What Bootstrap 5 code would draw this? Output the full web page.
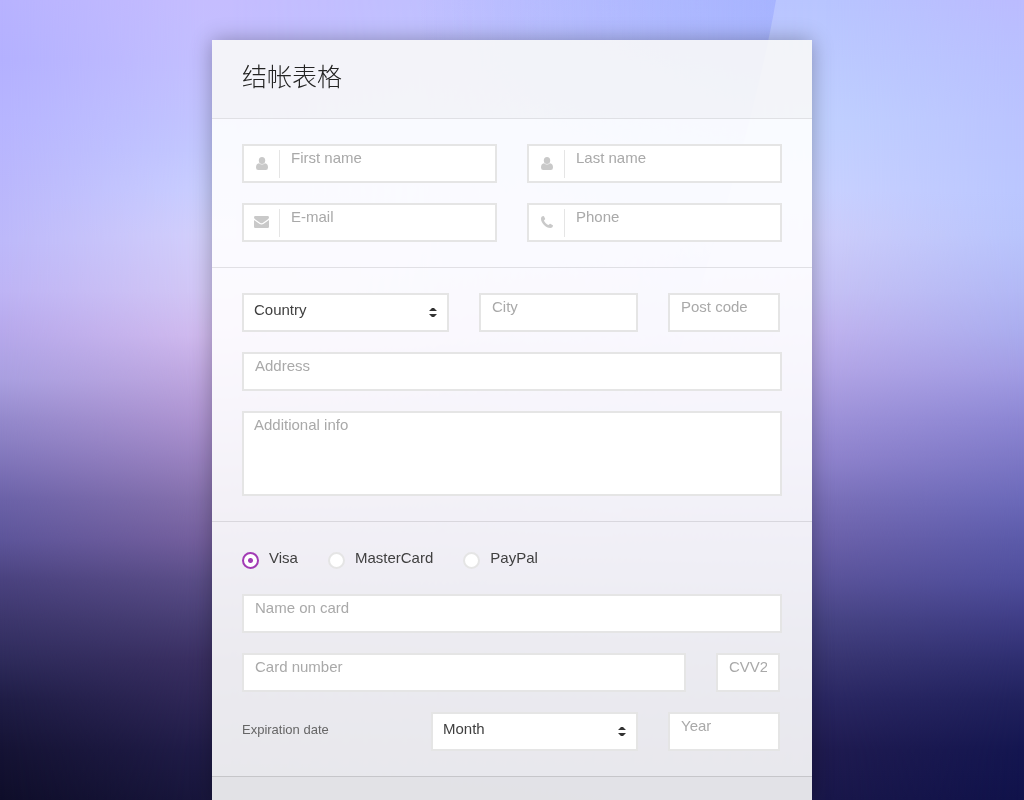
<!DOCTYPE html>
<html lang="zh-CN">
<head>
<meta charset="utf-8">
<meta name="viewport" content="width=device-width, initial-scale=1">
<title>结帐表格</title>
<link href="https://cdn.jsdelivr.net/npm/bootstrap@5.3.0/dist/css/bootstrap.min.css" rel="stylesheet">
<style>
  :root { --field: #e5e5e5; --accent: #a23bb5; }
  body {
    font-family: "Liberation Sans", "Noto Sans CJK SC", sans-serif;
    font-size: 15px; line-height: 23px; color: #404040;
    background: none; padding-top: 40px;
  }
  .backdrop { position: fixed; inset: 0; z-index: -1; }
  .sheet { width: 100%; max-width: 600px; box-shadow: 0 0 20px rgba(0, 0, 0, .3); }
  .sheet-head { padding: 20px 30px 28px; background: rgba(248, 248, 248, .9); }
  .sheet-head h1 { font: 300 25px/30px "Noto Sans CJK SC", sans-serif; color: #232323; margin: 0; }
  .sheet section { padding: 25px 30px; border-top: 1px solid rgba(0, 0, 0, .1); background: rgba(255, 255, 255, .9); }
  .sheet-foot { border-top: 1px solid rgba(0, 0, 0, .12); background: rgba(248, 248, 248, .9); }
  .stack { gap: 20px; }
  .cols { column-gap: 30px; row-gap: 20px; }
  .pair { grid-template-columns: 1fr 1fr; }
  .place { grid-template-columns: 207fr 159fr 112fr; padding-right: 2px; }
  .number { grid-template-columns: 444fr 64fr; padding-right: 2px; }
  .expiry { grid-template-columns: 159fr 207fr 112fr; padding-right: 2px; }
  .sheet .form-control, .sheet .form-select {
    min-width: 0; height: 39px; border: 2px solid var(--field); border-radius: 0;
    padding: 0 11px 13px; font-size: 15px; line-height: 22px; color: #404040; background-color: #fff;
  }
  .sheet .form-control:focus, .sheet .form-select:focus { border-color: var(--accent); box-shadow: none; }
  .sheet .form-control::placeholder { color: #a9a9a9; }
  .sheet textarea.form-control { height: 85px; resize: none; padding: 0 10px; line-height: 24px; }
  .sheet .form-select {
    padding: 0 30px 5px 10px; line-height: 30px;
    background-image: url("data:image/svg+xml,%3Csvg xmlns='http://www.w3.org/2000/svg' viewBox='0 0 8 11'%3E%3Cpath fill='%23333' d='M0 4 3 1h2l3 3zM0 7h8l-3 3H3z'/%3E%3C/svg%3E");
    background-size: 8px 11px; background-position: right 10px top 12px;
  }
  .iconed .form-control { padding-left: 47px; }
  .field-icon { position: absolute; left: 2px; top: 6px; width: 36px; height: 28px; padding-bottom: 2px; border-right: 1px solid var(--field); pointer-events: none; }
  .field-icon svg { fill: #c9c9c9; }
  .methods { gap: 30px; padding-bottom: 25px; }
  .methods .form-check { padding: 0; min-height: 0; margin: 0; gap: 10px; line-height: 21px; }
  .methods .form-check-input { float: none; margin: 5px 0 0; width: 17px; height: 17px; border: 2px solid var(--field); background-color: #fff; }
  .methods .form-check-input:checked {
    border-color: var(--accent);
    background-image: radial-gradient(circle, var(--accent) 2px, transparent 3px);
  }
  .methods .form-check-input:focus { box-shadow: none; }
  .expiry label { font-size: 13px; color: #666; padding-top: 6px; }
</style>
</head>
<body class="min-vh-100 d-flex flex-column align-items-center">
<svg class="backdrop w-100 h-100" viewBox="0 0 1024 800" preserveAspectRatio="none" aria-hidden="true">
  <defs>
    <linearGradient id="sky1" gradientUnits="userSpaceOnUse" x1="0" y1="0" x2="0" y2="1000">
      <stop offset="0" stop-color="#b8b3ff"/><stop offset=".06" stop-color="#b4b1ff"/><stop offset=".12" stop-color="#b7b5ff"/><stop offset=".24" stop-color="#bdb9fa"/><stop offset=".29" stop-color="#beb4f5"/><stop offset=".33" stop-color="#b7a9ec"/><stop offset=".38" stop-color="#a99fe0"/><stop offset=".42" stop-color="#9489cc"/><stop offset=".46" stop-color="#8176bb"/><stop offset=".5" stop-color="#6b62a8"/><stop offset=".54" stop-color="#5d559a"/><stop offset=".58" stop-color="#4a427f"/><stop offset=".62" stop-color="#3c366c"/><stop offset=".66" stop-color="#2e2b5b"/><stop offset=".7" stop-color="#1f1d46"/><stop offset=".75" stop-color="#151334"/><stop offset=".8" stop-color="#0f0e2a"/>
    </linearGradient>
    <linearGradient id="sky2" gradientUnits="userSpaceOnUse" x1="0" y1="0" x2="0" y2="1000">
      <stop offset="0" stop-color="#c5bdff"/><stop offset=".06" stop-color="#c3bfff"/><stop offset=".12" stop-color="#c2c4ff"/><stop offset=".15" stop-color="#c3c8ff"/><stop offset=".19" stop-color="#c9ceff"/><stop offset=".235" stop-color="#d2cffb"/><stop offset=".29" stop-color="#d2c7f5"/><stop offset=".335" stop-color="#d0baee"/><stop offset=".37" stop-color="#c2aae2"/><stop offset=".42" stop-color="#ae94d1"/><stop offset=".46" stop-color="#9a82c0"/><stop offset=".5" stop-color="#8570ac"/><stop offset=".54" stop-color="#745f9d"/><stop offset=".58" stop-color="#5b4e88"/><stop offset=".62" stop-color="#493f75"/><stop offset=".66" stop-color="#3a2f62"/><stop offset=".7" stop-color="#2f2757"/><stop offset=".75" stop-color="#201c48"/><stop offset=".8" stop-color="#18163c"/>
    </linearGradient>
    <linearGradient id="sky3" gradientUnits="userSpaceOnUse" x1="0" y1="0" x2="0" y2="1000">
      <stop offset="0" stop-color="#b8c5ff"/><stop offset=".06" stop-color="#bccaff"/><stop offset=".12" stop-color="#c0d0ff"/><stop offset=".19" stop-color="#c8d1ff"/><stop offset=".235" stop-color="#cccdfb"/><stop offset=".29" stop-color="#c5c1f5"/><stop offset=".33" stop-color="#bfb3ef"/><stop offset=".37" stop-color="#b2a5e6"/><stop offset=".42" stop-color="#9d91d8"/><stop offset=".46" stop-color="#8e82cc"/><stop offset=".5" stop-color="#7a70b9"/><stop offset=".54" stop-color="#6b61aa"/><stop offset=".58" stop-color="#5a539a"/><stop offset=".62" stop-color="#474484"/><stop offset=".66" stop-color="#383571"/><stop offset=".7" stop-color="#2a2762"/><stop offset=".75" stop-color="#1f1b50"/><stop offset=".8" stop-color="#19174a"/>
    </linearGradient>
    <linearGradient id="sky4" gradientUnits="userSpaceOnUse" x1="0" y1="0" x2="0" y2="1000">
      <stop offset="0" stop-color="#bbbbff"/><stop offset=".06" stop-color="#b9c0ff"/><stop offset=".12" stop-color="#bac3ff"/><stop offset=".19" stop-color="#bac6ff"/><stop offset=".235" stop-color="#b8c4fc"/><stop offset=".29" stop-color="#b2b8f5"/><stop offset=".33" stop-color="#aaadee"/><stop offset=".37" stop-color="#a29de4"/><stop offset=".42" stop-color="#8c86d3"/><stop offset=".46" stop-color="#7c77c5"/><stop offset=".5" stop-color="#6b69b9"/><stop offset=".54" stop-color="#5b5aa9"/><stop offset=".58" stop-color="#4f4e9c"/><stop offset=".62" stop-color="#3f3d86"/><stop offset=".66" stop-color="#2e2e70"/><stop offset=".7" stop-color="#20215d"/><stop offset=".75" stop-color="#141650"/><stop offset=".8" stop-color="#10124a"/>
    </linearGradient>
    <linearGradient id="ramp2" gradientUnits="userSpaceOnUse" x1="0" y1="0" x2="205" y2="0"><stop offset="0" stop-color="#fff" stop-opacity="0"/><stop offset="1" stop-color="#fff"/></linearGradient>
    <linearGradient id="ramp3" gradientUnits="userSpaceOnUse" x1="230" y1="0" x2="820" y2="0"><stop offset="0" stop-color="#fff" stop-opacity="0"/><stop offset="1" stop-color="#fff"/></linearGradient>
    <linearGradient id="ramp4" gradientUnits="userSpaceOnUse" x1="825" y1="0" x2="1024" y2="0"><stop offset="0" stop-color="#fff" stop-opacity="0"/><stop offset="1" stop-color="#fff"/></linearGradient>
    <linearGradient id="rampDown" gradientUnits="userSpaceOnUse" x1="0" y1="40" x2="0" y2="620"><stop offset="0" stop-color="#fff"/><stop offset=".2" stop-color="#fff" stop-opacity=".4"/><stop offset="1" stop-color="#fff" stop-opacity="0"/></linearGradient>
    <mask id="fade2" maskUnits="userSpaceOnUse" x="0" y="0" width="1024" height="800"><rect width="1024" height="800" fill="url(#ramp2)"/></mask>
    <mask id="fade3" maskUnits="userSpaceOnUse" x="0" y="0" width="1024" height="800"><rect width="1024" height="800" fill="url(#ramp3)"/></mask>
    <mask id="fade4" maskUnits="userSpaceOnUse" x="0" y="0" width="1024" height="800"><rect width="1024" height="800" fill="url(#ramp4)"/></mask>
    <mask id="fadeDown" maskUnits="userSpaceOnUse" x="0" y="0" width="1024" height="800"><rect width="1024" height="800" fill="url(#rampDown)"/></mask>
    <linearGradient id="shade" gradientUnits="userSpaceOnUse" x1="420" y1="0" x2="776" y2="0"><stop offset="0" stop-color="#98a6ff" stop-opacity="0"/><stop offset="1" stop-color="#98a6ff" stop-opacity=".55"/></linearGradient>
  </defs>
  <rect width="1024" height="800" fill="url(#sky1)"/>
  <rect width="1024" height="800" fill="url(#sky2)" mask="url(#fade2)"/>
  <rect width="1024" height="800" fill="url(#sky3)" mask="url(#fade3)"/>
  <rect width="1024" height="800" fill="url(#sky4)" mask="url(#fade4)"/>
  <path fill="url(#shade)" mask="url(#fadeDown)" d="M420 0H776Q740 210 580 620H420z"/>
</svg>
<main class="sheet d-flex flex-column flex-grow-1">
  <header class="sheet-head"><h1>结帐表格</h1></header>
  <form class="d-flex flex-column flex-grow-1">
    <section class="d-grid cols pair">
      <div class="position-relative iconed">
        <span class="field-icon d-flex align-items-center justify-content-center"><svg width="12" height="13" viewBox="0 0 12 13"><ellipse cx="6" cy="3.500" rx="3.200" ry="3.500"/><path d="M3 6.200Q6 8.600 9 6.200 12 6.500 12 10.500 12 13 9.800 13H2.200Q0 13 0 10.500 0 6.500 3 6.200z"/></svg></span>
        <input class="form-control" type="text" placeholder="First name" aria-label="First name">
      </div>
      <div class="position-relative iconed">
        <span class="field-icon d-flex align-items-center justify-content-center"><svg width="12" height="13" viewBox="0 0 12 13"><ellipse cx="6" cy="3.500" rx="3.200" ry="3.500"/><path d="M3 6.200Q6 8.600 9 6.200 12 6.500 12 10.500 12 13 9.800 13H2.200Q0 13 0 10.500 0 6.500 3 6.200z"/></svg></span>
        <input class="form-control" type="text" placeholder="Last name" aria-label="Last name">
      </div>
      <div class="position-relative iconed">
        <span class="field-icon d-flex align-items-center justify-content-center"><svg width="15" height="12" viewBox="0 0 15 12"><path d="M1.400 0h12.200Q15 0 15 1.400 15 2.500 13.600 3.500L9 6.700Q7.500 7.700 6 6.700L1.400 3.500Q0 2.500 0 1.400 0 0 1.400 0zM0 4 5.300 7.700Q7.500 9.200 9.700 7.700L15 4V10.700Q15 12 13.700 12H1.300Q0 12 0 10.700z"/></svg></span>
        <input class="form-control" type="email" placeholder="E-mail" aria-label="E-mail">
      </div>
      <div class="position-relative iconed">
        <span class="field-icon d-flex align-items-center justify-content-center"><svg width="12" height="12" viewBox="0 0 12 12"><path d="M2.500 0C3 0 3.200.6 4.200 2.700 4.500 3.500 2.800 4.200 3 4.700 3.800 6.400 5.500 8.200 7.300 9 7.800 9.200 8.600 7.500 9.200 7.800 11.300 8.900 12 9.200 12 9.500 12 11.200 10.600 12 9.300 12 5 12 0 7 0 2.700 0 1.400.9 0 2.500 0z"/></svg></span>
        <input class="form-control" type="tel" placeholder="Phone" aria-label="Phone">
      </div>
    </section>
    <section class="d-flex flex-column stack">
      <div class="d-grid cols place">
        <select class="form-select" aria-label="Country"><option>Country</option></select>
        <input class="form-control" type="text" placeholder="City" aria-label="City">
        <input class="form-control" type="text" placeholder="Post code" aria-label="Post code">
      </div>
      <input class="form-control" type="text" placeholder="Address" aria-label="Address">
      <textarea class="form-control" placeholder="Additional info" aria-label="Additional info"></textarea>
    </section>
    <section>
      <div class="d-flex methods">
        <div class="form-check d-flex"><input class="form-check-input" type="radio" name="method" id="visa" checked><label for="visa">Visa</label></div>
        <div class="form-check d-flex"><input class="form-check-input" type="radio" name="method" id="mastercard"><label for="mastercard">MasterCard</label></div>
        <div class="form-check d-flex"><input class="form-check-input" type="radio" name="method" id="paypal"><label for="paypal">PayPal</label></div>
      </div>
      <div class="d-flex flex-column stack">
        <input class="form-control" type="text" placeholder="Name on card" aria-label="Name on card">
        <div class="d-grid cols number">
          <input class="form-control" type="text" placeholder="Card number" aria-label="Card number">
          <input class="form-control" type="text" placeholder="CVV2" aria-label="CVV2">
        </div>
        <div class="d-grid cols expiry">
          <label for="month">Expiration date</label>
          <select class="form-select" id="month"><option>Month</option></select>
          <input class="form-control" type="text" placeholder="Year" aria-label="Year">
        </div>
      </div>
    </section>
    <footer class="sheet-foot flex-grow-1"></footer>
  </form>
</main>
<script src="https://cdn.jsdelivr.net/npm/bootstrap@5.3.0/dist/js/bootstrap.bundle.min.js"></script>
</body>
</html>
